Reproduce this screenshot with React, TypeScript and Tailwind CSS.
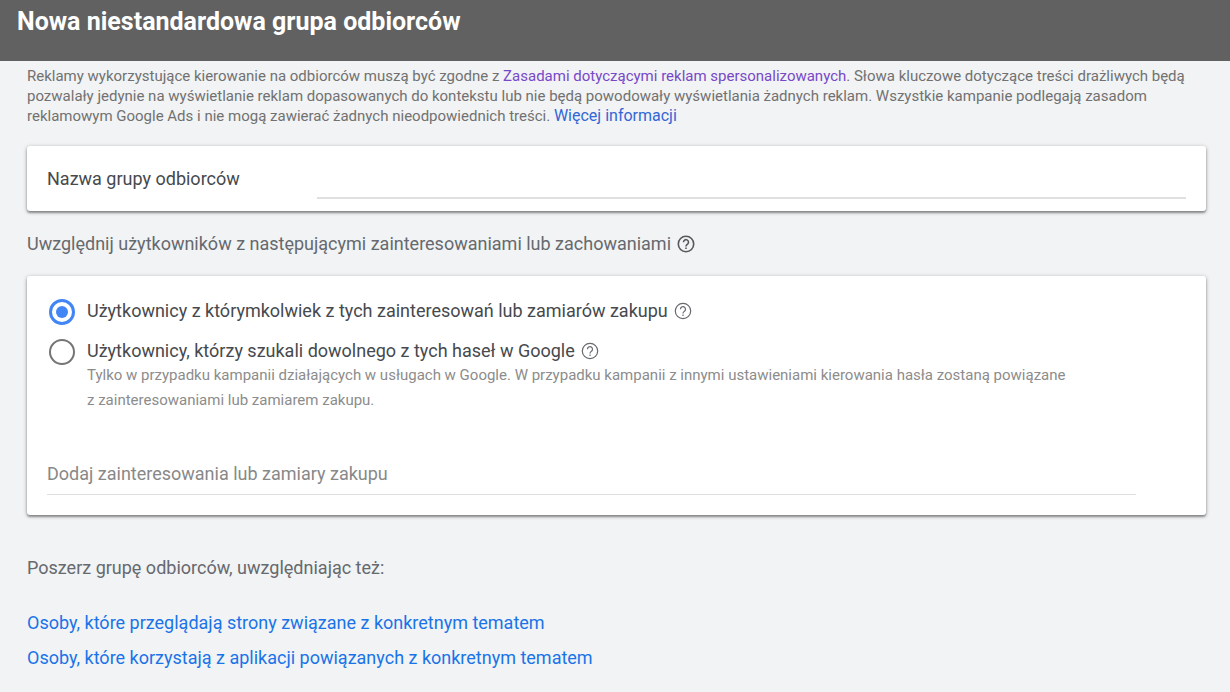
import { useState } from "react";

const linkClass = "text-[#1a73e8] hover:underline";
const cardClass =
  "rounded-[3px] bg-white px-5 shadow-[0_2px_2px_rgba(0,0,0,0.3),0_1px_4px_rgba(0,0,0,0.3)]";

function HelpIcon({ className }: { className: string }) {
  return (
    <svg viewBox="0 0 18 18" fill="none" stroke="currentColor" className={`size-[18px] shrink-0 ${className}`} aria-hidden="true">
      <circle cx="9" cy="9" r="7.7" />
      <path d="M6.5 7.2a2.5 2.5 0 1 1 4.2 1.8c-.9.8-1.7 1.2-1.7 2.4" />
      <path d="M9 12.4v1.6" />
    </svg>
  );
}

const options = [
  {
    id: "interests",
    label: "Użytkownicy z którymkolwiek z tych zainteresowań lub zamiarów zakupu",
    hint: "",
  },
  {
    id: "searches",
    label: "Użytkownicy, którzy szukali dowolnego z tych haseł w Google",
    hint: "Tylko w przypadku kampanii działających w usługach w Google. W przypadku kampanii z innymi ustawieniami kierowania hasła zostaną powiązane z\u00a0zainteresowaniami lub zamiarem zakupu.",
  },
];

export default function App() {
  const [name, setName] = useState("");
  const [mode, setMode] = useState("interests");
  const [interests, setInterests] = useState("");

  return (
    <div className="min-h-screen bg-[#f1f3f4] font-[Roboto,sans-serif] text-[#66696e]">
      <header className="h-[61px] bg-[#616161] px-[17px] pt-1.5">
        <h1 className="text-[25px] leading-8 font-bold text-white">Nowa niestandardowa grupa odbiorców</h1>
      </header>

      <main className="pr-6 pb-5 pl-[27px]">
        <p className="pt-[5px] text-[15px] leading-5 text-[#717171]">
          Reklamy wykorzystujące kierowanie na odbiorców muszą być zgodne z{" "}
          <a href="#policy" className="text-[#7848c8] hover:underline">
            Zasadami dotyczącymi reklam spersonalizowanych
          </a>
          . Słowa kluczowe dotyczące treści drażliwych będą pozwalały jedynie na wyświetlanie reklam dopasowanych do
          kontekstu lub nie będą powodowały wyświetlania żadnych reklam. Wszystkie kampanie podlegają zasadom
          reklamowym Google Ads i nie mogą zawierać żadnych nieodpowiednich treści.{" "}
          <a href="#more" className="text-base leading-5 text-[#3367d6] hover:underline">
            Więcej informacji
          </a>
        </p>

        <section className={`mt-5 flex h-[65px] items-start ${cardClass}`}>
          <label htmlFor="audience-name" className="w-[270px] shrink-0 pt-[21px] text-lg leading-6 text-[#46494d]">
            Nazwa grupy odbiorców
          </label>
          <input
            id="audience-name"
            value={name}
            onChange={(e) => setName(e.target.value)}
            className="h-[53px] min-w-0 flex-1 border-b-2 border-[#e0e0e0] pt-4 text-lg text-[#46494d] outline-none"
          />
        </section>

        <h2 className="mt-[21px] flex items-center gap-1.5 text-lg leading-6">
          Uwzględnij użytkowników z następującymi zainteresowaniami lub zachowaniami
          <HelpIcon className="stroke-[1.6] text-[#55585c]" />
        </h2>

        <section className={`mt-5 pt-[23px] pb-5 ${cardClass}`}>
          <fieldset>
            {options.map((option) => (
              <div key={option.id} className="flex min-h-10 items-start">
                <input
                  id={option.id}
                  type="radio"
                  name="mode"
                  checked={mode === option.id}
                  onChange={() => setMode(option.id)}
                  className="mr-3 ml-0.5 grid size-[26px] shrink-0 appearance-none place-items-center rounded-full border-2 border-[#757575] before:size-3 before:rounded-full checked:border-3 checked:border-[#4285f4] checked:before:bg-[#4285f4]"
                />
                <div>
                  <div className="flex items-center gap-1.5 text-[#46494d]">
                    <label htmlFor={option.id} className="text-lg leading-6">
                      {option.label}
                    </label>
                    <HelpIcon className="stroke-[1.2] text-[#66696e]" />
                  </div>
                  {option.hint && (
                    <p className="max-w-[1030px] text-[15px] leading-[25px] text-[#8c8c8c]">{option.hint}</p>
                  )}
                </div>
              </div>
            ))}
          </fieldset>
          <input
            aria-label="Dodaj zainteresowania lub zamiary zakupu"
            placeholder="Dodaj zainteresowania lub zamiary zakupu"
            value={interests}
            onChange={(e) => setInterests(e.target.value)}
            className="mt-10 block h-[42px] w-[calc(100%-50px)] border-b border-[#e0e0e0] text-lg text-[#46494d] outline-none placeholder:text-[#888888]"
          />
        </section>

        <h2 className="mt-[41px] text-lg leading-6">Poszerz grupę odbiorców, uwzględniając też:</h2>
        <ul className="mt-[25px] text-lg leading-[35px]">
          <li>
            <a href="#pages" className={linkClass}>
              Osoby, które przeglądają strony związane z konkretnym tematem
            </a>
          </li>
          <li>
            <a href="#apps" className={linkClass}>
              Osoby, które korzystają z aplikacji powiązanych z konkretnym tematem
            </a>
          </li>
        </ul>
      </main>
    </div>
  );
}
